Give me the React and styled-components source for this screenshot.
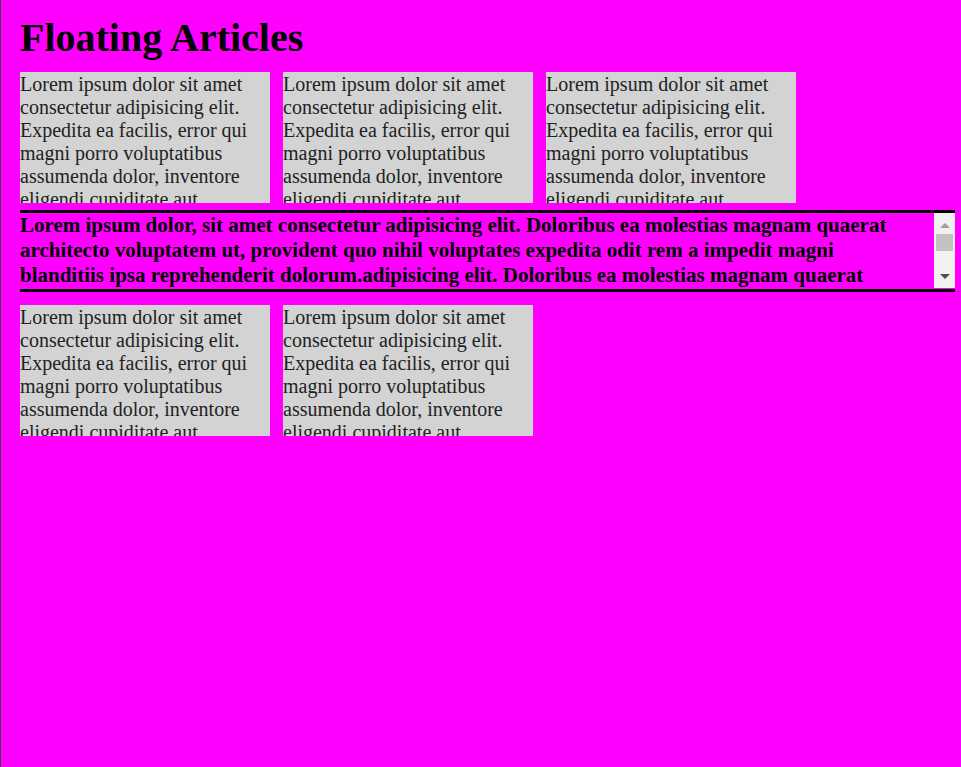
import React, { useRef, useState } from "react";
import styled, { createGlobalStyle } from "styled-components";

const GlobalStyle = createGlobalStyle`
  * { box-sizing: border-box; }
  body {
    margin: 0;
    background: #ff00ff;
    color: #000;
    font-family: "Liberation Serif", "Times New Roman", serif;
    font-size: 20px;
    line-height: 23px;
  }
`;

const Page = styled.main`
  min-height: 100vh;
  padding: 15px 6px 0 19px;
  border-left: 1px solid #444;
`;

const Title = styled.h1`
  margin: 0 0 11px;
  font-size: 40px;
  line-height: 46px;
`;

const Articles = styled.section`
  display: flex;
  flex-wrap: wrap;
  gap: 13px;
`;

const Article = styled.article`
  width: 250px;
  height: 131px;
  padding-top: 1px;
  overflow: hidden;
  background: lightgray;
  color: #222;
`;

const Banner = styled.section`
  display: flex;
  height: 82px;
  margin: 7px 0 13px;
  border-top: 3px solid #000;
  border-bottom: 3px solid #000;
`;

const BannerText = styled.p`
  flex: 1;
  margin: 0;
  padding-right: 12px;
  overflow: hidden;
  font-weight: bold;
  font-size: 21px;
  line-height: 25px;
`;

const ScrollBar = styled.div`
  display: flex;
  flex-direction: column;
  width: 21px;
  height: 75px;
  background: #f1f1f1;
`;

const ScrollButton = styled.button`
  display: flex;
  align-items: center;
  justify-content: center;
  height: 21px;
  padding: ${(p) => (p.$up ? "3px 0 0" : "0 0 3px")};
  border: 0;
  background: transparent;
  color: ${(p) => (p.$dim ? "#a89e96" : "#505050")};
`;

const Track = styled.div`
  flex: 1;
  padding: 0 2px;
`;

const Thumb = styled.div`
  height: 17px;
  background: #c1c1bd;
`;

const articleText =
  "Lorem ipsum dolor sit amet consectetur adipisicing elit. Expedita ea facilis, error qui magni porro voluptatibus assumenda dolor, inventore eligendi cupiditate aut";

const sentence =
  "adipisicing elit. Doloribus ea molestias magnam quaerat architecto voluptatem ut, provident quo nihil voluptates expedita odit rem a impedit magni blanditiis ipsa reprehenderit dolorum.";
const bannerText = "Lorem ipsum dolor, sit amet consectetur " + sentence.repeat(5);

function ArticleRow({ count }) {
  return (
    <Articles>
      {Array.from({ length: count }, (_, i) => (
        <Article key={i}>{articleText}</Article>
      ))}
    </Articles>
  );
}

function ScrollingBanner() {
  const text = useRef(null);
  const [offset, setOffset] = useState(0);
  const update = () => {
    const el = text.current;
    const range = el.scrollHeight - el.clientHeight;
    setOffset(range > 0 ? (el.scrollTop / range) * 16 : 0);
  };
  const scroll = (amount) => text.current.scrollBy({ top: amount });
  return (
    <Banner>
      <BannerText ref={text} onScroll={update}>{bannerText}</BannerText>
      <ScrollBar>
        <ScrollButton $up $dim={offset === 0} aria-label="Scroll up" onClick={() => scroll(-25)}>
          <svg width="10" height="5" viewBox="0 0 10 5"><path d="M0 5 5 0l5 5z" fill="currentColor" /></svg>
        </ScrollButton>
        <Track>
          <Thumb style={{ marginTop: offset }} />
        </Track>
        <ScrollButton aria-label="Scroll down" onClick={() => scroll(25)}>
          <svg width="10" height="5" viewBox="0 0 10 5"><path d="M0 0h10L5 5z" fill="currentColor" /></svg>
        </ScrollButton>
      </ScrollBar>
    </Banner>
  );
}

export default function App() {
  return (
    <>
      <GlobalStyle />
      <Page>
        <Title>Floating Articles</Title>
        <ArticleRow count={3} />
        <ScrollingBanner />
        <ArticleRow count={2} />
      </Page>
    </>
  );
}
